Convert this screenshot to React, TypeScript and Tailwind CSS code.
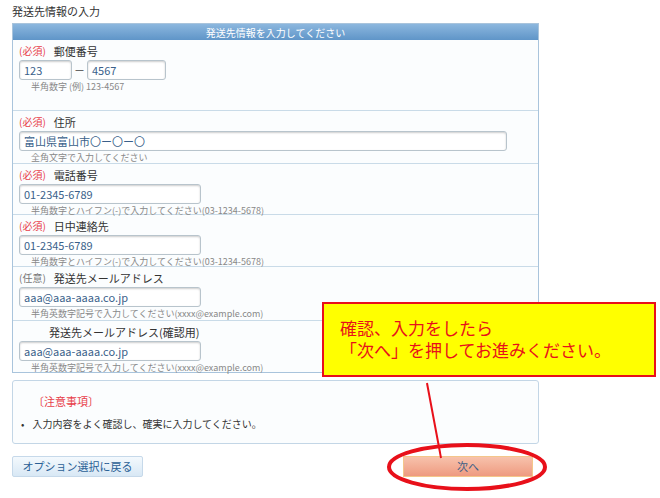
import React from 'react';

const F = { fontFamily: '"Noto Sans CJK JP", "Noto Sans", sans-serif' };

const Req = ({ label, grey }: { label: string; grey?: boolean }) => (
  <span className={`${grey ? 'text-[#777]' : 'text-[#e8404a]'} mr-2 text-[10px]`}>{label}</span>
);

const Input = ({ value, w }: { value: string; w: string }) => (
  <div className={`${w} h-[20px] border border-[#b8c4cc] rounded-[3px] bg-white shadow-[inset_0_1px_2px_rgba(0,0,0,0.2)] flex items-center px-1 text-[11px] leading-none text-[#3a5f8a]`}>
    {value}
  </div>
);

const Row = ({
  tag,
  label,
  children,
  hint,
  h,
  grey,
}: {
  tag?: string;
  label: string;
  children: React.ReactNode;
  hint: string;
  h: string;
  grey?: boolean;
}) => (
  <div className={`${h} border-t border-[#c9dbe8] px-[6px] pt-[3px] first:border-t-0`}>
    <div className="text-[11px] leading-none text-[#333] h-[16px] flex items-center">
      {tag ? <Req label={tag} grey={grey} /> : <span className="w-[30px]" />}
      {label}
    </div>
    <div className="mt-[1px]">{children}</div>
    <div className="text-[9px] leading-[12px] text-[#888] pl-[12px] mt-[1px]">{hint}</div>
  </div>
);

export default function App() {
  return (
    <div style={F} className="relative w-[660px] h-[498px] bg-white overflow-hidden">
      <div className="px-[12px] pt-[3px]">
        <div className="text-[11px] text-[#333] h-[20px]">発送先情報の入力</div>
        <div className="border border-[#a9c4dc] w-[527px]">
          <div className="h-[16px] bg-gradient-to-b from-[#8cb7de] to-[#5f95c8] text-white text-[10px] flex items-center justify-center">
            発送先情報を入力してください
          </div>
          <div className="bg-[#fbfdfe]">
            <Row tag="(必須)" label="郵便番号" hint="半角数字 (例) 123-4567" h="h-[70px]">
              <div className="flex items-center">
                <Input value="123" w="w-[53px]" />
                <span className="mx-[2px] text-[11px] text-[#444]">－</span>
                <Input value="4567" w="w-[79px]" />
              </div>
            </Row>
            <Row tag="(必須)" label="住所" hint="全角文字で入力してください" h="h-[53px]">
              <Input value="富山県富山市〇ー〇ー〇" w="w-[488px]" />
            </Row>
            <Row tag="(必須)" label="電話番号" hint="半角数字とハイフン(-)で入力してください(03-1234-5678)" h="h-[51px]">
              <Input value="01-2345-6789" w="w-[182px]" />
            </Row>
            <Row tag="(必須)" label="日中連絡先" hint="半角数字とハイフン(-)で入力してください(03-1234-5678)" h="h-[52px]">
              <Input value="01-2345-6789" w="w-[182px]" />
            </Row>
            <Row tag="(任意)" grey label="発送先メールアドレス" hint="半角英数字記号で入力してください(xxxx@example.com)" h="h-[54px]">
              <Input value="aaa@aaa-aaaa.co.jp" w="w-[182px]" />
            </Row>
            <Row label="発送先メールアドレス(確認用)" hint="半角英数字記号で入力してください(xxxx@example.com)" h="h-[52px]">
              <Input value="aaa@aaa-aaaa.co.jp" w="w-[182px]" />
            </Row>
          </div>
        </div>
        <div className="mt-[7px] w-[527px] h-[64px] border border-[#c3d6e6] rounded-[3px] bg-[#fbfdfe] px-[8px] pt-[12px]">
          <div className="text-[11px] text-[#e8404a] pl-[12px]">〔注意事項〕</div>
          <div className="text-[10px] text-[#333] mt-[6px] flex items-center gap-[8px]">
            <span>•</span>入力内容をよく確認し、確実に入力してください。
          </div>
        </div>
        <div className="mt-[12px] flex items-center">
          <div className="w-[131px] h-[21px] border border-[#c6d9ea] rounded-[2px] bg-gradient-to-b from-[#f4f9fd] to-[#d8e8f5] text-[11px] text-[#2a5f95] flex items-center justify-center">
            オプション選択に戻る
          </div>
          <div className="ml-[260px] w-[130px] h-[21px] border border-[#f4c68a] bg-gradient-to-b from-[#f7c2ac] to-[#ee9a80] text-[11px] text-[#3d5f86] flex items-center justify-center">
            次へ
          </div>
        </div>
      </div>

      <svg className="absolute left-0 top-0 pointer-events-none" width="660" height="498">
        <line x1="427" y1="383" x2="441" y2="458" stroke="#e8101a" strokeWidth="2" />
        <ellipse cx="467" cy="467" rx="78" ry="22" fill="none" stroke="#e8101a" strokeWidth="4" />
      </svg>

      <div className="absolute left-[322px] top-[302px] w-[334px] h-[75px] bg-[#ffff00] border-2 border-[#e8101a] pl-[16px] pt-[13px] text-[17px] leading-[22px] text-[#e8101a]">
        <div>確認、入力をしたら</div>
        <div>「次へ」を押してお進みください。</div>
      </div>
    </div>
  );
}
